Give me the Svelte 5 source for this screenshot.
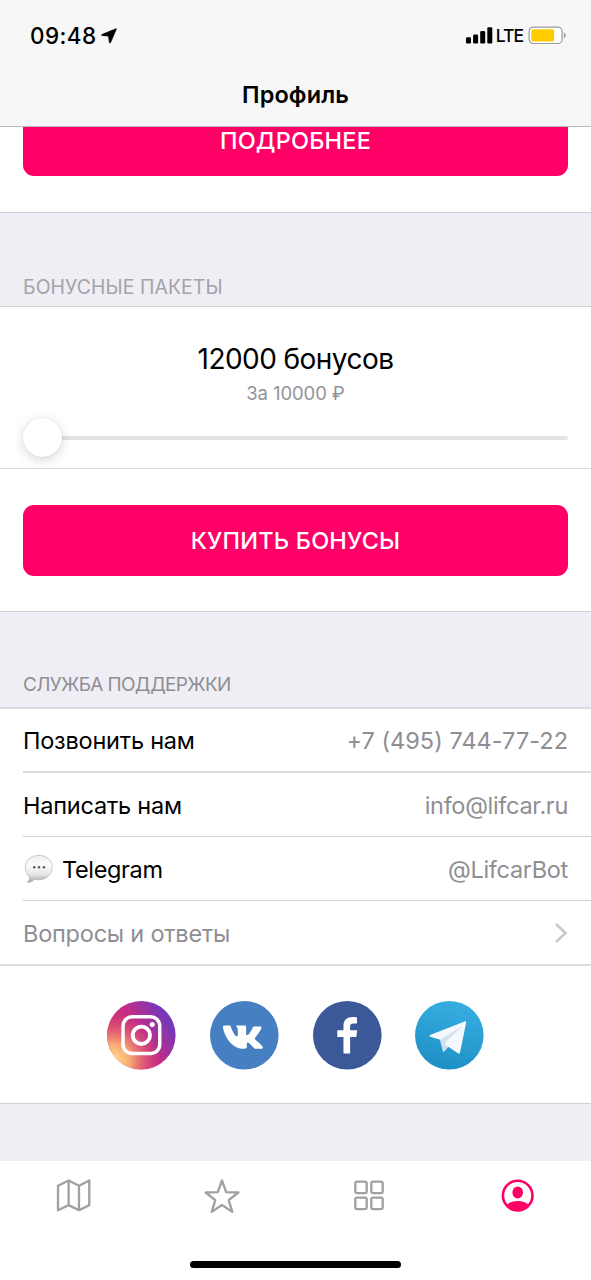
<script lang="ts">
  interface Contact {
    label: string;
    value: string;
    bubble?: boolean;
    phone?: boolean;
  }

  const contacts: Contact[] = [
    { label: 'Позвонить нам', value: '+7 (495) 744-77-22', phone: true },
    { label: 'Написать нам', value: 'info@lifcar.ru' },
    { label: 'Telegram', value: '@LifcarBot', bubble: true },
  ];

  const tabs = ['map', 'favorites', 'services', 'profile'];
  let activeTab = $state('profile');
</script>

<div class="screen">
  <header class="top">
    <div class="status-bar">
      <div class="status-left">
        <span class="time">09:48</span>
        <svg class="location" viewBox="0 0 16 16" width="16" height="16">
          <path d="M15 .8 1 6.5c-.6.3-.5.8.1.9l6.5.7.8 6.4c.1.7.8.8 1.1.1L15.3 1.1c.1-.3 0-.4-.3-.3z" />
        </svg>
      </div>
      <div class="status-right">
        <svg class="signal" viewBox="0 0 27 17" width="27" height="17">
          <rect x="0" y="10.3" width="5" height="6.2" rx="1.3" />
          <rect x="7.1" y="7.6" width="5" height="8.9" rx="1.3" />
          <rect x="14.2" y="4" width="5" height="12.5" rx="1.3" />
          <rect x="21.3" y="0.3" width="5" height="16.2" rx="1.3" />
        </svg>
        <span class="network">LTE</span>
        <svg class="battery" viewBox="0 0 39 19" width="39" height="19">
          <rect x="1.1" y="1.1" width="33" height="16.4" rx="4.2" fill="#fff" stroke="#9b9b9d" stroke-width="1.2" />
          <rect x="3.3" y="3.2" width="22.8" height="12.2" rx="2" fill="#fc0" />
          <path d="M35.9 6.4c2.3.8 2.3 5 0 5.8z" fill="#9b9b9d" />
        </svg>
      </div>
    </div>
    <h1>Профиль</h1>
  </header>

  <main>
    <section class="details">
      <button class="primary">ПОДРОБНЕЕ</button>
    </section>

    <h2 class="bonus-heading">БОНУСНЫЕ ПАКЕТЫ</h2>
    <section class="bonus">
      <div class="package">
        <div class="amount">12000 бонусов</div>
        <div class="price">За 10000 ₽</div>
        <div class="slider">
          <span class="thumb"></span>
          <span class="track"></span>
        </div>
      </div>
      <div class="buy">
        <button class="primary">КУПИТЬ БОНУСЫ</button>
      </div>
    </section>

    <h2 class="support-heading">СЛУЖБА ПОДДЕРЖКИ</h2>
    <section class="support">
      <ul>
        {#each contacts as contact}
          <li>
            {#if contact.bubble}
              <svg class="bubble" viewBox="0 0 30 30" width="30" height="30">
                <defs>
                  <linearGradient id="bubble-fill" x1="0" y1="0" x2="0" y2="1">
                    <stop offset="0" stop-color="#eee" />
                    <stop offset="0.35" stop-color="#fbfbfb" />
                    <stop offset="0.7" stop-color="#e6e6e6" />
                    <stop offset="1" stop-color="#a4a4a4" />
                  </linearGradient>
                </defs>
                <path
                  d="M15 1.4c7.6 0 13.2 4.9 13.2 11.8S22.6 25.8 15 25.8c-1.5 0-3-.2-4.3-.6-1.5 1.6-4 3.1-6.8 3.3-.5 0-.6-.5-.2-.8 1.3-1.2 1.9-2.9 1.8-4.7C2.8 20.7 1.3 17.4 1.3 13.2 1.3 6.3 7.4 1.4 15 1.4z"
                  fill="url(#bubble-fill)"
                  stroke="#bdbdbd"
                  stroke-width="0.8"
                />
                <circle cx="10.2" cy="13.3" r="1.2" fill="#555" />
                <circle cx="15" cy="13.3" r="1.2" fill="#555" />
                <circle cx="19.9" cy="13.3" r="1.2" fill="#555" />
              </svg>
            {/if}
            <span class="label" class:after-icon={contact.bubble}>{contact.label}</span>
            <span class="value" class:phone={contact.phone}>{contact.value}</span>
          </li>
        {/each}
        <li class="faq">
          <span class="label">Вопросы и ответы</span>
          <svg class="chevron" viewBox="0 0 14 22" width="14" height="22">
            <path d="m2 2 9.5 9L2 20" />
          </svg>
        </li>
      </ul>

      <div class="socials">
        <a class="social" href="#instagram" aria-label="Instagram">
          <svg viewBox="0 0 68 68">
            <defs>
              <linearGradient id="ig-base" x1="0.1" y1="0.8" x2="0.9" y2="0.3">
                <stop offset="0.1" stop-color="#d8366f" />
                <stop offset="0.55" stop-color="#c32d85" />
                <stop offset="1" stop-color="#7638b9" />
              </linearGradient>
              <radialGradient id="ig-glow" cx="0.1" cy="0.86" r="0.68">
                <stop offset="0" stop-color="#ffe08a" />
                <stop offset="0.35" stop-color="#fbb574" stop-opacity="0.9" />
                <stop offset="1" stop-color="#dd4a70" stop-opacity="0" />
              </radialGradient>
            </defs>
            <circle cx="34" cy="34" r="34" fill="url(#ig-base)" />
            <circle cx="34" cy="34" r="34" fill="url(#ig-glow)" />
            <rect x="15.9" y="15.7" width="36.4" height="36.4" rx="9" fill="none" stroke="#fff" stroke-width="3.4" />
            <circle cx="34.1" cy="34" r="8.6" fill="none" stroke="#fff" stroke-width="3.8" />
            <circle cx="44.8" cy="23.4" r="2.5" fill="#fff" />
          </svg>
        </a>
        <a class="social" href="#vk" aria-label="VK">
          <svg viewBox="0 0 68 68">
            <circle cx="34" cy="34" r="34" fill="#4680c2" />
            <path
              d="M14.5 24.4h4.6c.9 0 1.3.4 1.6 1.3 1.7 4.8 4.3 9.3 6 9.3.8 0 .9-.6.9-2v-4.5c-.1-2-.9-2.3-1.500-3.100-.4-.6 0-1 .6-1h7.6c1.100 0 1.500.6 1.500 1.700v6.700c0 .8.4 1 .8 1 .6 0 1.300-.5 2.600-1.900 1.800-2.100 3.200-5.600 3.200-5.600.3-.6.8-1.100 1.700-1.100h5.400c1.400 0 1.700.7 1.400 1.700-.6 2.400-6 9.200-6 9.200-.5.8-.6 1.200 0 2 .5.7 6.800 5.600 7.500 7.700.3 1-.3 1.600-1.400 1.600h-5.300c-1.300 0-1.800-.5-5.200-4.100-1.400-1.400-2.700-2.200-3.300-2.200-.6 0-.7.3-.7 1.300v3.300c0 1.100-.4 1.700-3.200 1.700-6 0-11.500-3.300-15.800-9.600-2.800-4.200-4.100-8.400-4.600-11.400-.2-1.200.2-1.900 1.600-2z"
              fill="#fff"
            />
          </svg>
        </a>
        <a class="social" href="#facebook" aria-label="Facebook">
          <svg viewBox="0 0 68 68">
            <circle cx="34" cy="34" r="34" fill="#3b5998" />
            <path
              d="M36.8 52.1V35.600h6.100l.9-6.500h-7v-3.800c0-2 .8-3.100 3.200-3.100h3.600V16.200c-1-.2-2.700-.3-4.500-.3-5.300 0-8.900 3.100-8.900 8.600v4.600h-6.100v6.500h6.100v16.500z"
              fill="#fff"
            />
          </svg>
        </a>
        <a class="social" href="#telegram" aria-label="Telegram">
          <svg viewBox="0 0 68 68">
            <defs>
              <linearGradient id="tg-base" x1="0.65" y1="0" x2="0.4" y2="1">
                <stop offset="0" stop-color="#37aee2" />
                <stop offset="1" stop-color="#1e8fc4" />
              </linearGradient>
            </defs>
            <circle cx="34" cy="34" r="34" fill="url(#tg-base)" />
            <path d="m24.6 38 3 11.8c.2.8.8.8 1.4.2l5.500-6L31 38z" fill="#cfdff0" />
            <path d="M15 33.700 49.200 20.300c1-.4 1.700.2 1.500 1.300l-6 29.300c-.3 1.300-1.100 1.500-2.200.8L30 43.300l-5-5-9.900-2.900c-1-.3-1.100-1.300-.1-1.700z" fill="#f5f9fe" />
            <path d="m25 38.300 22-13.800-16 15.600-2 7.500z" fill="#d3e0ee" />
          </svg>
        </a>
      </div>
    </section>
  </main>

  <nav class="tab-bar">
    {#each tabs as tab}
      <button class="tab" class:active={activeTab === tab} onclick={() => (activeTab = tab)} aria-label={tab}>
        <svg viewBox="0 0 36 36" width="36" height="36">
          {#if tab === 'map'}
            <path d="m2 7.800 10.600-5.300 10.400 5.300 10.300-5.300v24.600L23 32.300l-10.400-5.200L2 32.300zM12.600 2.800v24.300M23 8v24.200" />
          {:else if tab === 'favorites'}
            <path d="m18 2.500 4.200 11.700 12.200.3-9.700 7.600 3.600 11.800L18 27 7.700 33.900l3.600-11.800-9.700-7.600 12.200-.3z" />
          {:else if tab === 'services'}
            <rect x="4.300" y="3.700" width="11.400" height="11.400" rx="1.800" />
            <rect x="20.300" y="3.700" width="11.400" height="11.400" rx="1.800" />
            <rect x="4.300" y="19.700" width="11.400" height="11.400" rx="1.800" />
            <rect x="20.300" y="19.700" width="11.400" height="11.400" rx="1.800" />
          {:else}
            <circle cx="18.700" cy="17.600" r="14.800" stroke-width="2.600" />
            <ellipse class="solid" cx="18.700" cy="14.600" rx="5.300" ry="6" />
            <path class="solid" d="M7.700 26.900c2.500-2.400 6.200-3.800 11-3.800s8.500 1.400 11 3.800c-2.700 3.500-6.500 5.500-11 5.500s-8.300-2-11-5.500z" />
          {/if}
        </svg>
      </button>
    {/each}
    <span class="home-indicator"></span>
  </nav>
</div>

<style>
  :global(body) {
    margin: 0;
    overflow: hidden;
  }

  .screen {
    display: flex;
    flex-direction: column;
    width: 591px;
    height: 1280px;
    overflow: hidden;
    background: #efeef4;
    color: #000;
    font-family: Inter, 'Liberation Sans', sans-serif;
  }

  .top {
    flex: none;
    box-sizing: border-box;
    height: 127px;
    background: #f7f7f7;
    border-bottom: 1px solid #bcbcbe;
  }

  .status-bar {
    display: flex;
    justify-content: space-between;
    height: 63px;
    padding: 0 24px 0 30px;
  }

  .status-left,
  .status-right {
    display: flex;
    align-items: center;
    height: 71px;
  }

  .time {
    font-size: 22.5px;
    font-weight: 500;
    letter-spacing: 0.4px;
  }

  .location {
    margin-left: 5px;
    stroke: #000;
    stroke-width: 0.8;
  }

  .network {
    margin-left: 3px;
    font-size: 17.5px;
    font-weight: 500;
    letter-spacing: -1px;
  }

  .battery {
    margin-left: 5px;
  }

  h1 {
    margin: 0;
    line-height: 64px;
    font-size: 23.5px;
    font-weight: 600;
    letter-spacing: 0.1px;
    text-align: center;
  }

  main {
    flex: 1;
  }

  section {
    background: #fff;
    border-bottom: 1px solid #d0d0d3;
  }

  .primary {
    display: block;
    width: 100%;
    height: 71px;
    padding: 0;
    border: none;
    border-radius: 11px;
    background: #ff0066;
    color: #fff;
    font: 500 23.5px/69px Inter, 'Liberation Sans', sans-serif;
    letter-spacing: 0.2px;
    cursor: pointer;
  }

  .details {
    display: flex;
    align-items: flex-end;
    height: 49px;
    padding: 0 23px 36px;
    overflow: hidden;
  }

  .details .primary {
    flex: none;
  }

  h2 {
    box-sizing: border-box;
    margin: 0;
    padding: 0 23px;
    border-bottom: 1px solid #d0d0d3;
    color: #8e8e93;
    font-size: 19.4px;
    font-weight: 400;
    line-height: 24px;
  }

  .bonus-heading {
    height: 94px;
    padding-top: 62px;
    color: #a3a3a8;
    letter-spacing: 0.1px;
  }

  .support-heading {
    height: 97px;
    padding-top: 61px;
    border-bottom: 2px solid #dcdcdf;
    font-size: 19px;
    letter-spacing: -0.65px;
  }

  .package {
    box-sizing: border-box;
    height: 162px;
    padding: 34px 23px 0;
    border-bottom: 1px solid #dcdcdf;
    text-align: center;
  }

  .amount {
    font-size: 28px;
    line-height: 36px;
    letter-spacing: -0.55px;
  }

  .price {
    margin-top: 3px;
    color: #929296;
    font-size: 18.5px;
    line-height: 26px;
    letter-spacing: -0.1px;
  }

  .slider {
    display: flex;
    align-items: center;
    height: 40px;
    margin-top: 11px;
  }

  .thumb {
    z-index: 1;
    width: 39px;
    height: 39px;
    border-radius: 50%;
    background: #fff;
    box-shadow: 0 3px 12px rgba(0, 0, 0, 0.16), 0 0 2px rgba(0, 0, 0, 0.1);
  }

  .track {
    flex: 1;
    height: 4px;
    margin: 2px 0 0 -4px;
    border-radius: 0 2px 2px 0;
    background: #e4e4e4;
  }

  .buy {
    padding: 36px 23px 35px;
  }

  ul {
    margin: 0;
    padding: 0 0 0 23px;
    list-style: none;
  }

  li {
    display: flex;
    align-items: center;
    box-sizing: border-box;
    height: 64px;
    padding: 1px 23px 0 0;
    border-bottom: 1px solid #d0d0d3;
    font-size: 23.5px;
  }

  li:first-child {
    border-bottom: 2px solid #dcdcdf;
  }

  .label {
    letter-spacing: -0.22px;
  }

  .label.after-icon {
    letter-spacing: -0.35px;
  }

  .value {
    margin-left: auto;
    color: #8e8e93;
    letter-spacing: -0.3px;
  }

  .value.phone {
    letter-spacing: 0.03px;
  }

  .bubble {
    margin: 0 8px 0 1px;
  }

  .faq {
    height: 65px;
    margin-left: -23px;
    padding-left: 23px;
    border-bottom: 2px solid #dcdcdf;
    color: #8e8e93;
  }

  .chevron {
    margin-left: auto;
    fill: none;
    stroke: #c7c7cc;
    stroke-width: 2.5;
  }

  .socials {
    display: flex;
    justify-content: center;
    gap: 34.1px;
    padding: 34.5px 0 33.9px;
  }

  .social,
  .social svg {
    display: block;
    width: 68.6px;
    height: 68.6px;
    overflow: visible;
  }

  .tab-bar {
    position: relative;
    display: grid;
    grid-template-columns: repeat(4, 1fr);
    flex: none;
    height: 119px;
    background: #fff;
  }

  .tab {
    display: flex;
    justify-content: center;
    height: 70px;
    padding: 17px 0 0;
    border: none;
    background: none;
    color: #a0a0a0;
    cursor: pointer;
  }

  .tab.active {
    color: #ff0066;
  }

  .tab svg {
    fill: none;
    stroke: currentColor;
    stroke-width: 2.3;
    stroke-linejoin: round;
  }

  .tab .solid {
    fill: currentColor;
    stroke: none;
  }

  .home-indicator {
    position: absolute;
    left: 190px;
    bottom: 12px;
    width: 211px;
    height: 7px;
    border-radius: 4px;
    background: #000;
  }
</style>
